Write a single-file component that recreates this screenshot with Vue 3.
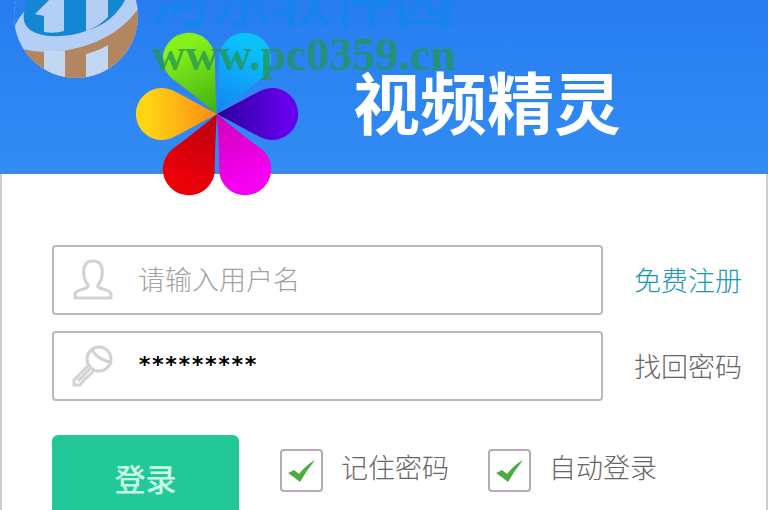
<script setup>
import { ref } from "vue"

const username = ref("")
const password = ref("*********")

const options = ref([
    { id: "remember", label: "记住密码", checked: true },
    { id: "auto", label: "自动登录", checked: true },
])

// diagonal petals are a bit longer than the horizontal ones
const longPetal = "M0 0C-6 -15 -20 -44 -24 -52A26 26 0 1 1 24 -52C20 -44 6 -15 0 0Z"
const shortPetal = "M0 0C-8 -15 -20 -37 -23 -43A26 26 0 1 1 23 -43C20 -37 8 -15 0 0Z"

const petals = [
    { name: "green", angle: -27, d: longPetal, from: "#86f01a", to: "#3fae12" },
    { name: "cyan", angle: 27, d: longPetal, from: "#0cc0fa", to: "#1282f4" },
    { name: "violet", angle: 90, d: shortPetal, from: "#6600ec", to: "#2c0098" },
    { name: "magenta", angle: 153, d: longPetal, from: "#f600f2", to: "#d000b8" },
    { name: "red", angle: 207, d: longPetal, from: "#ec0008", to: "#b80010" },
    { name: "orange", angle: 270, d: shortPetal, from: "#ffd414", to: "#fb8a14" },
]
</script>

<template>
    <div class="login">
        <header class="banner">
            <svg class="flower" viewBox="-88 -88 176 176" aria-hidden="true">
                <defs>
                    <linearGradient v-for="p in petals" :key="p.name" :id="p.name" x1="0" y1="0" x2="0" y2="1">
                        <stop offset="0.15" :stop-color="p.from" />
                        <stop offset="1" :stop-color="p.to" />
                    </linearGradient>
                </defs>
                <path
                    v-for="p in petals"
                    :key="p.name"
                    :d="p.d"
                    :fill="`url(#${p.name})`"
                    :transform="`rotate(${p.angle})`"
                />
            </svg>
            <h1 class="title">视频精灵</h1>

            <div class="watermark">
                <svg class="mark" viewBox="0 0 150 80" aria-hidden="true">
                    <defs>
                        <clipPath id="disc"><circle cx="76" cy="16" r="62" /></clipPath>
                    </defs>
                    <g clip-path="url(#disc)">
                        <path d="M0 0H150V80H0Z" fill="#b3cff5" />
                        <path d="M0 0H36C26 8 18 18 13 30H0Z" fill="#2a7ff0" />
                        <path d="M29 0H125C118 14 104 26 86 31C70 37 49 38 36 33C21 27 21 14 29 0Z" fill="#1486d2" />
                        <path d="M35 14L49 0H64V31C57 33 51 33 44 32V16Z" fill="#b3cff5" />
                        <path d="M86 0H108V17C102 23 95 28 86 31Z" fill="#b3cff5" />
                        <path d="M23 49C58 58 112 46 138 9V80H23Z" fill="#b18661" />
                        <path d="M44 51H65V80H44ZM86 54Q98 51 108 45V80H86Z" fill="#c1d7f2" />
                    </g>
                </svg>
                <span class="site-name">河东软件园</span>
                <span class="site-url">www.pc0359.cn</span>
            </div>
        </header>

        <form class="panel" @submit.prevent>
            <div class="row">
                <label class="field">
                    <svg class="icon" viewBox="0 0 42 42" aria-hidden="true">
                        <path d="M16 26C18 31 4 29 3 35V39H39V35C38 29 24 31 26 26C30 21 31 16 30 9C29 4 26 2 21 2S13 4 12 9C11 16 12 21 16 26Z" />
                    </svg>
                    <input v-model="username" type="text" placeholder="请输入用户名" aria-label="用户名" />
                </label>
                <a class="link register" href="#">免费注册</a>
            </div>
            <div class="row">
                <label class="field">
                    <svg class="icon" viewBox="0 0 42 42" aria-hidden="true">
                        <circle cx="27" cy="14" r="12" />
                        <path d="M20 5Q25 14 38 17M17 20L2 35V40H8L12 35L22 26M6 36L19 23" />
                    </svg>
                    <input v-model="password" class="secret" type="text" aria-label="密码" />
                </label>
                <a class="link" href="#">找回密码</a>
            </div>
            <div class="actions">
                <button class="submit" type="submit">登录</button>
                <label v-for="o in options" :key="o.id" class="option">
                    <span class="tick">
                        <input v-model="o.checked" type="checkbox" />
                        <svg v-if="o.checked" viewBox="0 0 43 43" aria-hidden="true">
                            <path d="M8 24L14 21L19 25Q26 16 35 11Q27 21 20 33Q14 28 8 24Z" fill="#4dad44" />
                        </svg>
                    </span>
                    <span class="option-text">{{ o.label }}</span>
                </label>
            </div>
        </form>
    </div>
</template>

<style>
body {
    margin: 0;
}
</style>

<style scoped>
.login {
    display: flex;
    flex-direction: column;
    height: 100vh;
    overflow: hidden;
    background: white;
    font-family: "Noto Sans CJK SC", sans-serif;
}

.login * {
    box-sizing: border-box;
}

.banner {
    position: relative;
    display: flex;
    flex-shrink: 0;
    align-items: flex-start;
    height: 174px;
    padding: 26px 0 0 129px;
    background: linear-gradient(#277df0, #328cf4);
    border-bottom: 2px solid #4388d2;
}

.flower {
    flex-shrink: 0;
    width: 176px;
    height: 176px;
}

.title {
    margin: 26px 0 0 48px;
    font-size: 67px;
    line-height: 96px;
    font-weight: 700;
    color: white;
    white-space: nowrap;
}

.watermark {
    position: absolute;
    top: 0;
    left: 0;
    width: 480px;
    height: 84px;
    overflow: hidden;
}

.mark {
    position: absolute;
    top: 0;
    left: 0;
    width: 150px;
    height: 80px;
}

.site-name {
    position: absolute;
    top: -40px;
    left: 150px;
    font-size: 61px;
    line-height: 72px;
    font-weight: 500;
    color: #1585ec;
    white-space: nowrap;
}

.site-url {
    position: absolute;
    top: 31px;
    left: 152px;
    font-family: "Liberation Serif", serif;
    font-size: 46px;
    line-height: 48px;
    font-weight: 700;
    color: rgba(34, 150, 82, 0.75);
}

.panel {
    display: flex;
    flex: 1;
    flex-direction: column;
    gap: 16px;
    padding: 71px 24px 0 50px;
    border: solid #c5ced6;
    border-width: 0 2px;
}

.row {
    display: flex;
    align-items: center;
    gap: 31px;
}

.field {
    display: flex;
    flex: 1;
    align-items: center;
    gap: 24px;
    height: 70px;
    padding: 0 18px;
    border: 2px solid #b9b9b9;
    border-radius: 4px;
}

.icon {
    flex-shrink: 0;
    width: 42px;
    height: 42px;
    fill: none;
    stroke: #d2d2d2;
    stroke-width: 3;
}

.field input {
    flex: 1;
    min-width: 0;
    height: 60px;
    padding: 0 0 4px;
    border: none;
    outline: none;
    background: transparent;
    font-family: inherit;
    font-size: 27px;
    font-weight: 300;
    color: black;
}

.field input::placeholder {
    color: #a2a2a2;
}

.field .secret {
    font-family: "DejaVu Sans Mono", monospace;
    font-size: 22px;
    font-weight: 700;
}

.link {
    font-size: 27px;
    line-height: 40px;
    font-weight: 300;
    color: #666;
    text-decoration: none;
}

.register {
    color: #2196b4;
}

.actions {
    display: flex;
    align-items: flex-start;
    margin-top: 18px;
}

.submit {
    width: 187px;
    height: 84px;
    margin-right: 41px;
    border: none;
    border-radius: 6px;
    background: #22c898;
    font-family: inherit;
    font-size: 31px;
    font-weight: 500;
    color: #c8fbe6;
}

.option {
    display: flex;
    gap: 18px;
    margin: 14px 39px 0 0;
}

.tick {
    position: relative;
    width: 43px;
    height: 43px;
}

.tick input {
    display: block;
    width: 100%;
    height: 100%;
    margin: 0;
    appearance: none;
    border: 2px solid #b5aab8;
    border-radius: 4px;
}

.tick svg {
    position: absolute;
    inset: 0;
    pointer-events: none;
}

.option-text {
    font-size: 27px;
    line-height: 36px;
    font-weight: 300;
    color: #666;
}
</style>
